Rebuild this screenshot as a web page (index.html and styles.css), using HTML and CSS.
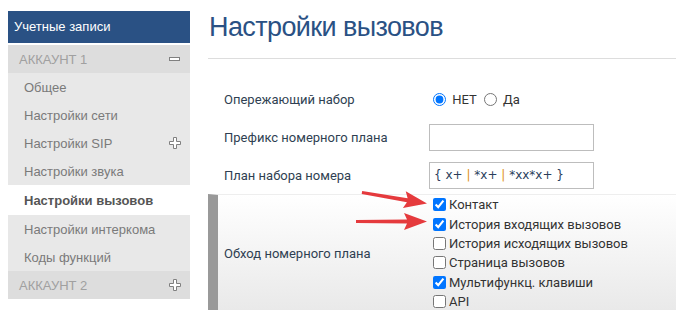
FILE: index.html
```html
<!DOCTYPE html>
<html>
	<head>
		<meta charset="utf-8">
		<title>Настройки вызовов</title>
		<link rel="stylesheet" href="styles.css">
	</head>
	<body>
		<div class="page">
			<!-- боковое меню -->
			<div class="sidebar">
				<div class="side-title">Учетные записи</div>
				<div class="side-account">
					<span>АККАУНТ 1</span>
					<svg class="side-icon" width="12" height="5" viewBox="0 0 12 5"><rect x="0.5" y="0.5" width="10" height="3" fill="#fff" stroke="#808080"/></svg>
				</div>
				<a class="side-item" href="#">Общее</a>
				<a class="side-item" href="#">Настройки сети</a>
				<a class="side-item" href="#">Настройки SIP
					<svg class="side-icon" width="12" height="12" viewBox="0 0 12 12"><path d="M4.5 0.5H7.5V4.5H11.5V7.5H7.5V11.5H4.5V7.5H0.5V4.5H4.5Z" fill="#fff" stroke="#808080"/></svg>
				</a>
				<a class="side-item" href="#">Настройки звука</a>
				<a class="side-item active" href="#">Настройки вызовов</a>
				<a class="side-item" href="#">Настройки интеркома</a>
				<a class="side-item" href="#">Коды функций</a>
				<div class="side-account">
					<span>АККАУНТ 2</span>
					<svg class="side-icon" width="12" height="12" viewBox="0 0 12 12"><path d="M4.5 0.5H7.5V4.5H11.5V7.5H7.5V11.5H4.5V7.5H0.5V4.5H4.5Z" fill="#fff" stroke="#808080"/></svg>
				</div>
			</div>

			<!-- основная часть -->
			<div class="content">
				<h1 class="page-title">Настройки вызовов</h1>
				<div class="form">
					<div class="form-row">
						<div class="form-label">Опережающий набор</div>
						<div class="form-control">
							<label><input type="radio" name="pre" checked> НЕТ</label>
							<label><input type="radio" name="pre"> Да</label>
						</div>
					</div>
					<div class="form-row">
						<div class="form-label">Префикс номерного плана</div>
						<div class="form-control">
							<div class="text-box"></div>
						</div>
					</div>
					<div class="form-row">
						<div class="form-label">План набора номера</div>
						<div class="form-control">
							<div class="text-box">{ x+ <span class="pipe">|</span> *x+ <span class="pipe">|</span> *xx*x+ }</div>
						</div>
					</div>
					<div class="form-row group">
						<div class="form-label">Обход номерного плана</div>
						<div class="form-control options">
							<label class="option"><input type="checkbox" checked> Контакт</label>
							<label class="option"><input type="checkbox" checked> История входящих вызовов</label>
							<label class="option"><input type="checkbox"> История исходящих вызовов</label>
							<label class="option"><input type="checkbox"> Страница вызовов</label>
							<label class="option"><input type="checkbox" checked> Мультифункц. клавиши</label>
							<label class="option"><input type="checkbox"> API</label>
						</div>
					</div>
				</div>
			</div>
		</div>

		<!-- стрелки поверх формы -->
		<svg class="arrows" width="676" height="310" viewBox="0 0 676 310">
			<path transform="translate(427 203.5) rotate(9.6)" d="M0 0L-23 -8.5L-20 -2L-66 -1.5L-66 1.5L-20 2L-23 8.5Z" fill="#e53a3d"/>
			<path transform="translate(427 221.5)" d="M0 0L-23 -8.5L-20 -2L-71 -1.5L-71 1.5L-20 2L-23 8.5Z" fill="#e53a3d"/>
		</svg>
	</body>
</html>
```

FILE: styles.css
```css
* {
	padding: 0;
	margin: 0;
	box-sizing: border-box;
}
body {
	background-color: #FFFFFF;
	overflow: hidden;
}
.page {
	display: flex;
	align-items: flex-start;
	padding: 11px 0 0 8px;
}
/* боковое меню */
.sidebar {
	width: 182px;
	flex-shrink: 0;
	font-family: "Liberation Sans", Arial, sans-serif;
	font-size: 13px;
	background-color: #e8e8e8;
}
.side-title {
	height: 34px;
	line-height: 32px;
	padding-left: 6px;
	color: #FFFFFF;
	background-color: #2a5184;
	border-bottom: 2px solid #FFFFFF;
}
.side-account {
	display: flex;
	align-items: center;
	justify-content: space-between;
	height: 28px;
	padding: 0 9px 0 11px;
	color: #a0a0a0;
	background-color: #dddddd;
}
.side-item {
	display: flex;
	align-items: center;
	justify-content: space-between;
	height: 28px;
	padding: 0 9px 0 16px;
	color: #7a7a7a;
	text-decoration: none;
}
.side-item.active {
	height: 30px;
	background-color: #FFFFFF;
	color: #555555;
	font-weight: bold;
}
.side-icon {
	display: block;
}
/* основная часть */
.content {
	flex: 1;
	margin-left: 18px;
	font-family: Roboto, "Liberation Sans", sans-serif;
}
.page-title {
	font-family: "Liberation Sans", Arial, sans-serif;
	font-size: 27px;
	letter-spacing: -0.6px;
	font-weight: normal;
	color: #2a5184;
	line-height: 32px;
	height: 48px;
	border-bottom: 1px solid #dddddd;
	padding-left: 1px;
}
.form {
	padding-top: 21px;
}
.form-row {
	display: flex;
	align-items: center;
	height: 38px;
	padding-left: 16px;
	color: #2f3f52;
	font-size: 13px;
}
.form-label {
	width: 205px;
	flex-shrink: 0;
}
.form-control {
	font-size: 13px;
	color: #333333;
}
.form-control input {
	margin: 3px 3px 3px 4px;
	vertical-align: -2px;
}
.text-box {
	width: 165px;
	height: 27px;
	border: 1px solid #bdbdbd;
	padding-left: 4px;
	line-height: 25px;
	font-family: "DejaVu Sans", sans-serif;
	font-size: 12px;
	color: #2b3e5c;
}
.pipe {
	color: #e09015;
}
.group {
	height: 117px;
	padding-left: 6px;
	border-top: 1px solid #eeeeee;
	border-left: 10px solid #999999;
	background: linear-gradient(#ffffff, #e9e9e9);
}
.options {
	align-self: flex-start;
}
.option {
	display: flex;
	align-items: center;
	height: 19.4px;
}
.option input {
	vertical-align: middle;
}
.arrows {
	position: absolute;
	left: 0;
	top: 0;
	pointer-events: none;
}
```
